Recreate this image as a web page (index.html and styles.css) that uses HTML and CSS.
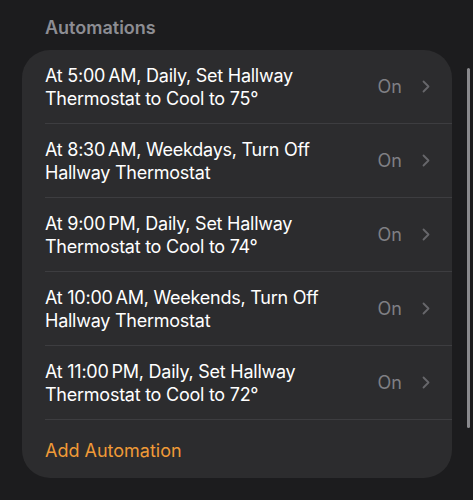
FILE: index.html
```html
<!DOCTYPE html>
<html lang="en">
<head>
    <meta charset="UTF-8">
    <meta name="viewport" content="width=device-width, initial-scale=1.0">
    <title>Automations</title>
    <link rel="stylesheet" href="styles.css">
</head>
<body>
    <div class="page">
        <h2 class="section-title">Automations</h2>
        <div class="card">
            <div class="row">
                <div class="row-text">At 5:00&#8201;AM, Daily, Set Hallway Thermostat to Cool to 75°</div>
                <span class="row-value">On</span>
                <svg class="chevron" width="8" height="13" viewBox="0 0 8 13"><path d="M1.5 1.5 L6.5 6.5 L1.5 11.5" fill="none" stroke="currentColor" stroke-width="1.8" stroke-linecap="round" stroke-linejoin="round"/></svg>
            </div>
            <div class="row">
                <div class="row-text">At 8:30&#8201;AM, Weekdays, Turn Off Hallway Thermostat</div>
                <span class="row-value">On</span>
                <svg class="chevron" width="8" height="13" viewBox="0 0 8 13"><path d="M1.5 1.5 L6.5 6.5 L1.5 11.5" fill="none" stroke="currentColor" stroke-width="1.8" stroke-linecap="round" stroke-linejoin="round"/></svg>
            </div>
            <div class="row">
                <div class="row-text">At 9:00&#8201;PM, Daily, Set Hallway Thermostat to Cool to 74°</div>
                <span class="row-value">On</span>
                <svg class="chevron" width="8" height="13" viewBox="0 0 8 13"><path d="M1.5 1.5 L6.5 6.5 L1.5 11.5" fill="none" stroke="currentColor" stroke-width="1.8" stroke-linecap="round" stroke-linejoin="round"/></svg>
            </div>
            <div class="row">
                <div class="row-text">At 10:00&#8201;AM, Weekends, Turn Off Hallway Thermostat</div>
                <span class="row-value">On</span>
                <svg class="chevron" width="8" height="13" viewBox="0 0 8 13"><path d="M1.5 1.5 L6.5 6.5 L1.5 11.5" fill="none" stroke="currentColor" stroke-width="1.8" stroke-linecap="round" stroke-linejoin="round"/></svg>
            </div>
            <div class="row">
                <div class="row-text">At 11:00&#8201;PM, Daily, Set Hallway Thermostat to Cool to 72°</div>
                <span class="row-value">On</span>
                <svg class="chevron" width="8" height="13" viewBox="0 0 8 13"><path d="M1.5 1.5 L6.5 6.5 L1.5 11.5" fill="none" stroke="currentColor" stroke-width="1.8" stroke-linecap="round" stroke-linejoin="round"/></svg>
            </div>
            <div class="row add-row">
                <span class="add-link">Add Automation</span>
            </div>
        </div>
        <div class="scrollbar"></div>
    </div>
</body>
</html>
```

FILE: styles.css
```css
* {
    margin: 0;
    padding: 0;
    box-sizing: border-box;
}

body {
    font-family: Inter, "Noto Sans", sans-serif;
    background-color: #1c1c1e;
    color: #fff;
    width: 473px;
    height: 500px;
    overflow: hidden;
}

.page {
    position: relative;
    padding: 16px 21px 0 22px;
}

.section-title {
    font-size: 18px;
    font-weight: 600;
    color: #8d8d93;
    padding-left: 23px;
    height: 34px;
    line-height: 24px;
}

/* card */
.card {
    background-color: #2c2c2e;
    border-radius: 28px;
    padding-left: 23px;
}

.row {
    display: flex;
    align-items: center;
    height: 74px;
    padding-right: 22px;
    border-bottom: 1px solid #3d3d40;
}

.row-text {
    flex: 1;
    font-size: 18px;
    line-height: 23px;
    letter-spacing: -0.25px;
    padding-right: 40px;
    color: #fff;
}

.row-value {
    font-size: 18px;
    color: #7f7f84;
    margin-right: 20px;
}

.chevron {
    color: #67676b;
}

.add-row {
    height: 58px;
    border-bottom: none;
    padding-top: 3px;
}

.add-link {
    font-size: 18px;
    color: #f09a37;
}

.scrollbar {
    position: absolute;
    top: 68px;
    right: 3px;
    width: 3px;
    height: 360px;
    border-radius: 2px;
    background-color: #8a8a8e;
}
```
